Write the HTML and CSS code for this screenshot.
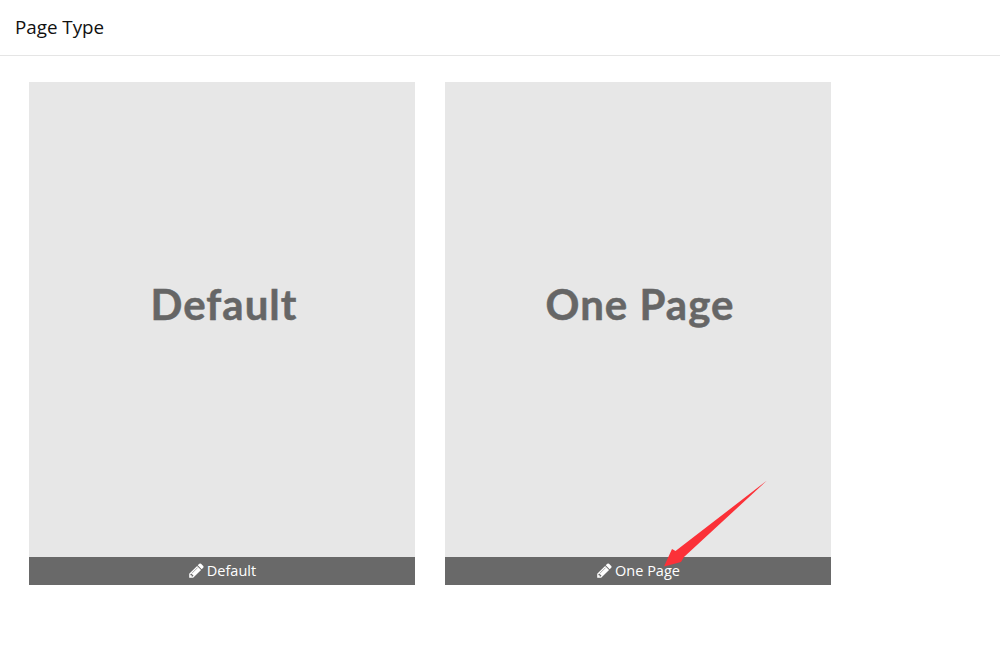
FILE: index.html
```html
<!DOCTYPE html>
<html lang="en">
<head>
<meta charset="utf-8">
<title>Page Type</title>
<link rel="stylesheet" href="styles.css">
</head>
<body>
<header class="topbar"><h1 class="title">Page Type</h1></header>
<main class="cards">
  <article class="card">
    <div class="preview">Default</div>
    <div class="caption">
      <svg class="pencil" viewBox="0 0 1792 1792"><path d="M491 1536l91-91-235-235-91 91v107h128v128h107zm523-928q0-22-22-22-10 0-17 7l-542 542q-7 7-7 17 0 22 22 22 10 0 17-7l542-542q7-7 7-17zm-54-192l416 416-832 832h-416v-416zm683 96q0 53-37 90l-166 166-416-416 166-165q36-38 90-38 53 0 91 38l235 234q37 39 37 91z"/></svg>
      <span>Default</span>
    </div>
  </article>
  <article class="card">
    <div class="preview">One Page</div>
    <div class="caption">
      <svg class="pencil" viewBox="0 0 1792 1792"><path d="M491 1536l91-91-235-235-91 91v107h128v128h107zm523-928q0-22-22-22-10 0-17 7l-542 542q-7 7-7 17 0 22 22 22 10 0 17-7l542-542q7-7 7-17zm-54-192l416 416-832 832h-416v-416zm683 96q0 53-37 90l-166 166-416-416 166-165q36-38 90-38 53 0 91 38l235 234q37 39 37 91z"/></svg>
      <span>One Page</span>
    </div>
  </article>
</main>
<svg class="arrow" viewBox="0 0 1000 659"><polygon points="767,480.5 684,557 681,562 664,566.5 672,549 675.5,551"/></svg>
</body>
</html>
```
FILE: styles.css
```css
* { box-sizing: border-box; }
html, body { margin: 0; padding: 0; background: #fff; }
body { width: 1000px; height: 659px; overflow: hidden; position: relative; font-family: "Open Sans", "Liberation Sans", sans-serif; }
.topbar { height: 56px; border-bottom: 1px solid #e5e5e5; padding: 0 0 2px 15px; display: flex; align-items: center; }
.title { margin: 0; font-size: 18.8px; font-weight: 400; color: #111; }
.cards { display: flex; gap: 30px; padding: 26px 0 0 29px; }
.card { width: 386px; height: 503px; display: flex; flex-direction: column; }
.preview { flex: 1; background: #e7e7e7; color: #666; font-family: Lato, "Open Sans", sans-serif; font-weight: 700; font-size: 42px; letter-spacing: 1px; -webkit-text-stroke: 0.5px #666; display: flex; align-items: center; justify-content: center; padding: 0 0 32px 4px; }
.caption { height: 28px; background: #696969; color: #fff; font-size: 14.5px; display: flex; align-items: center; justify-content: center; gap: 2px; padding-bottom: 2px; }
.pencil { width: 17px; height: 17px; fill: #fff; }
.arrow { position: absolute; left: 0; top: 0; width: 1000px; height: 659px; pointer-events: none; }
.arrow polygon { fill: #fb3138; }
```
